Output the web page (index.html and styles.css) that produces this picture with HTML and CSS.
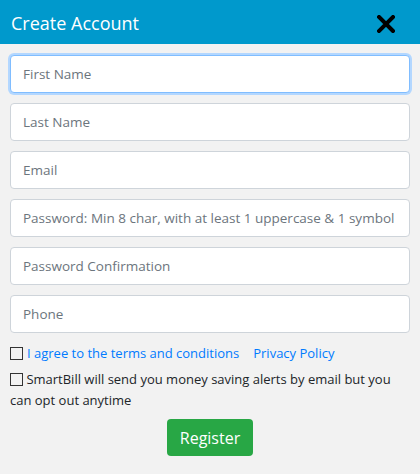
FILE: index.html
```html
<!DOCTYPE html>
<html>
<head>
<meta charset="utf-8">
<link rel="stylesheet" href="styles.css">
</head>
<body>
<div class="modal">
  <div class="header">
    <h1 class="title">Create Account</h1>
    <span class="close" aria-label="close">
      <svg width="18" height="18" viewBox="0 0 18 18"><path d="M2 2 L16 16 M16 2 L2 16" stroke="#000" stroke-width="4" stroke-linecap="square"/></svg>
    </span>
  </div>
  <form class="body">
    <input class="field focus" type="text" placeholder="First Name">
    <input class="field" type="text" placeholder="Last Name">
    <input class="field" type="text" placeholder="Email">
    <input class="field" type="password" placeholder="Password: Min 8 char, with at least 1 uppercase &amp; 1 symbol">
    <input class="field" type="password" placeholder="Password Confirmation">
    <input class="field" type="text" placeholder="Phone">
    <div class="check-row">
      <span class="box"></span>
      <a class="link" href="#">I agree to the terms and conditions</a>
      <a class="link policy" href="#">Privacy Policy</a>
    </div>
    <div class="check-row alerts">
      <p class="alert-text"><span class="box inline"></span> SmartBill will send you money saving alerts by email but you can opt out anytime</p>
    </div>
    <div class="actions">
      <button class="btn" type="button">Register</button>
    </div>
  </form>
</div>
</body>
</html>
```
FILE: styles.css
```css
* { box-sizing: border-box; }
html, body { margin: 0; padding: 0; }
body {
  background: #f2f2f2;
  font-family: "Open Sans", "Noto Sans", sans-serif;
  width: 420px;
  height: 474px;
  overflow: hidden;
}
.header {
  background: #0099cc;
  height: 44px;
  display: flex;
  align-items: center;
  justify-content: space-between;
  padding: 0 25px 0 11px;
}
.title {
  margin: 0;
  color: #fff;
  font-weight: 400;
  font-size: 18px;
  line-height: 1;
  padding-top: 2px;
}
.close { display: flex; padding-top: 3px; }
.body {
  display: flex;
  flex-direction: column;
  padding: 11px 10px 0 10px;
  margin: 0;
}
.field {
  height: 38px;
  width: 100%;
  margin: 0 0 10px 0;
  border: 1px solid #ced4da;
  border-radius: 4px;
  background: #fff;
  padding: 0 12px;
  font-family: "Open Sans", "Noto Sans", sans-serif;
  font-size: 13.5px;
  color: #495057;
  outline: none;
}
.field::placeholder { color: #6c757d; opacity: 1; }
.field.focus {
  border-color: #80bdff;
  box-shadow: 0 0 0 2px #b3d7ff;
}
.check-row {
  display: flex;
  align-items: center;
  font-size: 13px;
  line-height: 21px;
}
.box {
  width: 13px;
  height: 13px;
  border: 1px solid #333;
  background: transparent;
  display: inline-block;
  margin-right: 4px;
  flex: none;
}
.box.inline {
  vertical-align: -2px;
  margin-right: 0;
}
.link { color: #007bff; text-decoration: none; }
.policy { margin-left: 14px; }
.alerts { margin-top: 5px; }
.alert-text {
  margin: 0;
  color: #212529;
  font-size: 13px;
  line-height: 21px;
}
.actions {
  display: flex;
  justify-content: center;
  margin-top: 8px;
}
.btn {
  background: #28a745;
  color: #fff;
  border: none;
  border-radius: 4px;
  height: 37px;
  width: 86px;
  font-family: "Open Sans", "Noto Sans", sans-serif;
  font-size: 16px;
  padding: 0;
}
```
